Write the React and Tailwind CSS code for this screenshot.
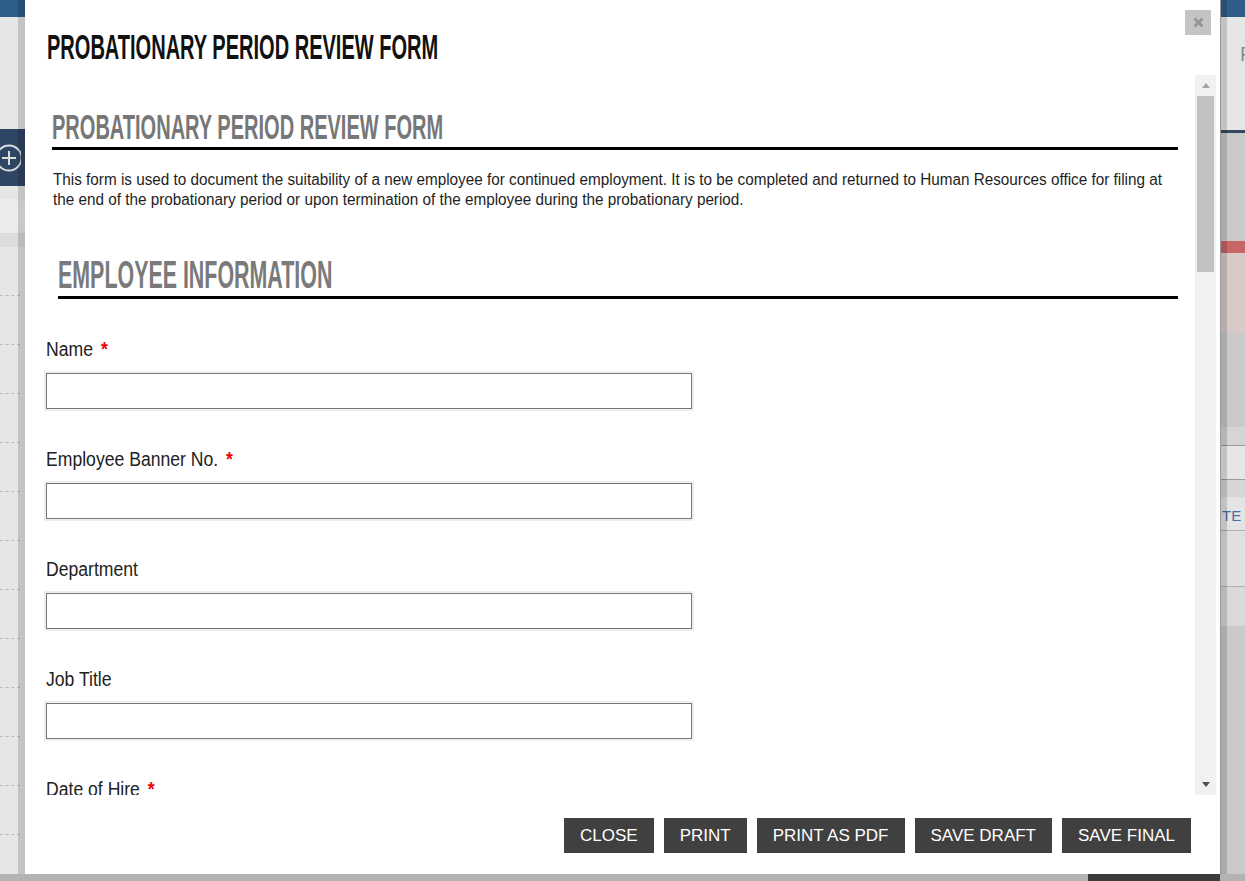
import React from "react";

const SANS = "font-['Liberation_Sans',Arial,sans-serif]";

function Field({ label, required }) {
  return (
    <div className="flex flex-col gap-[12px]">
      <div className={`h-[24px] text-[20px] leading-[24px] text-[#222] ${SANS}`}>
        <span className="inline-block origin-left scale-x-[0.88] whitespace-nowrap">
          {label}
          {required && <span className="ml-[9px] font-bold text-[#ee0000]">*</span>}
        </span>
      </div>
      <div className="w-[646px] h-[36px] border border-[#777] bg-white shadow-[0_0_0_2px_#eeeeee]" />
    </div>
  );
}

function LeftStrip() {
  const rows = Array.from({ length: 13 });
  return (
    <div className="relative w-[25px] h-full shrink-0 flex flex-col bg-[#e6e6e6] overflow-hidden">
      <div className="h-[17px] bg-[#2f5d89] shrink-0" />
      <div className="h-[112px] shrink-0" />
      <div className="h-[57px] bg-[#2f4565] flex items-center shrink-0">
        <svg width="26" height="32" viewBox="0 0 26 32" className="-ml-[5px]">
          <circle cx="14" cy="16" r="12.5" fill="none" stroke="#dcdcdc" strokeWidth="2" />
          <path d="M7 16h14M14 9v14" stroke="#dcdcdc" strokeWidth="2" />
        </svg>
      </div>
      <div className="h-[13px] shrink-0" />
      <div className="h-[34px] bg-[#ececec] rounded-r-[6px] shrink-0" />
      <div className="h-[14px] bg-[#dcdcdc] shrink-0" />
      <div className="flex flex-col shrink-0">
        {rows.map((_, i) => (
          <div key={i} className="h-[49px] w-[20px] border-b border-dashed border-[#bdbdbd] shrink-0" />
        ))}
      </div>
      <div className="absolute top-0 right-0 w-[7px] h-full bg-black/15" />
    </div>
  );
}

function RightStrip() {
  return (
    <div className="relative w-[25px] h-full shrink-0 flex flex-col bg-[#c9c9c9] overflow-hidden">
      <div className="h-[17px] bg-[#2f5d89] shrink-0" />
      <div className={`h-[113px] bg-[#e6e6e6] shrink-0 pl-[20px] pt-[25px] text-[20px] leading-[24px] text-[#8a8a8a] ${SANS}`}>
        F
      </div>
      <div className="h-[3px] bg-[#34495e] shrink-0" />
      <div className="h-[108px] shrink-0" />
      <div className="h-[12px] bg-[#c86565] shrink-0" />
      <div className="h-[80px] bg-[#d9caca] shrink-0" />
      <div className="h-[94px] shrink-0" />
      <div className="h-[18px] bg-[#d5d5d5] shrink-0" />
      <div className="h-[34px] bg-[#e6e6e6] border-t border-[#9a9a9a] shrink-0" />
      <div className="h-[18px] bg-[#d6d6d6] border-t border-[#9a9a9a] shrink-0" />
      <div className={`h-[33px] bg-[#e4e4e4] shrink-0 pl-[2px] pt-[10px] text-[15px] leading-[17px] text-[#4a6fa5] ${SANS}`}>
        TE
      </div>
      <div className="h-[56px] bg-[#e0e0e0] border-t border-[#b0b0b0] shrink-0" />
      <div className="h-[40px] bg-[#d9d9d9] border-t border-[#b0b0b0] shrink-0" />
      <div className="absolute top-0 left-0 w-[7px] h-full bg-black/15 border-l border-[#999]" />
    </div>
  );
}

function Scrollbar() {
  return (
    <div className="w-[21px] h-full bg-[#f1f1f1] flex flex-col items-center shrink-0">
      <div className="h-[21px] w-full flex items-center justify-center">
        <svg width="8" height="5" viewBox="0 0 8 5">
          <path d="M0 5L4 0L8 5Z" fill="#a3a3a3" />
        </svg>
      </div>
      <div className="w-[17px] h-[176px] bg-[#c1c1c1]" />
      <div className="flex-1" />
      <div className="h-[21px] w-full flex items-center justify-center">
        <svg width="8" height="5" viewBox="0 0 8 5">
          <path d="M0 0L4 5L8 0Z" fill="#505050" />
        </svg>
      </div>
    </div>
  );
}

function Btn({ children }) {
  return (
    <button className={`h-[35px] px-[16px] bg-[#404040] text-white text-[17px] leading-[35px] ${SANS}`}>
      {children}
    </button>
  );
}

function Modal() {
  return (
    <div className="relative w-[1195px] h-[874px] bg-white flex flex-col shrink-0">
      <div className="h-[75px] pl-[22px] pt-[25px] shrink-0">
        <div className={`text-[35px] leading-[44px] font-bold text-[#111] ${SANS}`}>
          <span className="inline-block origin-left scale-x-[0.572] whitespace-nowrap">
            PROBATIONARY PERIOD REVIEW FORM
          </span>
        </div>
      </div>
      <button className="absolute top-[10px] right-[9px] w-[26px] h-[25px] bg-[#c4c4c4] flex items-center justify-center">
        <svg width="11" height="11" viewBox="0 0 11 11">
          <path d="M1.5 1.5L9.5 9.5M9.5 1.5L1.5 9.5" stroke="#959595" strokeWidth="3" />
        </svg>
      </button>

      <div className="h-[720px] flex shrink-0">
        <div className="flex-1 overflow-hidden pl-[21px] pr-[17px]">
          <div className="mt-[32px] ml-[6px] border-b-[3px] border-black">
            <div className={`h-[40px] text-[35px] leading-[40px] font-bold text-[#777] ${SANS}`}>
              <span className="inline-block origin-left scale-x-[0.572] whitespace-nowrap">
                PROBATIONARY PERIOD REVIEW FORM
              </span>
            </div>
          </div>
          <div className="mt-[20px] ml-[7px]">
            <p className={`inline-block origin-left scale-x-[0.955] whitespace-nowrap text-[16px] leading-[20px] text-[#1e1e1e] ${SANS}`}>
              This form is used to document the suitability of a new employee for continued employment. It is to be completed and returned to Human Resources office for filing at
              <br />
              the end of the probationary period or upon termination of the employee during the probationary period.
            </p>
          </div>
          <div className="mt-[42px] ml-[12px] border-b-[3px] border-black">
            <div className={`h-[43px] text-[39px] leading-[43px] font-bold text-[#7a7a7a] ${SANS}`}>
              <span className="inline-block origin-left scale-x-[0.549] whitespace-nowrap">
                EMPLOYEE INFORMATION
              </span>
            </div>
          </div>
          <div className="mt-[38px] flex flex-col gap-[38px]">
            <Field label="Name" required />
            <Field label="Employee Banner No." required />
            <Field label="Department" />
            <Field label="Job Title" />
            <Field label="Date of Hire" required />
          </div>
        </div>
        <Scrollbar />
        <div className="w-[4px]" />
      </div>

      <div className="flex-1 flex justify-end items-start pt-[23px] pr-[29px] gap-[10px]">
        <Btn>CLOSE</Btn>
        <Btn>PRINT</Btn>
        <Btn>PRINT AS PDF</Btn>
        <Btn>SAVE DRAFT</Btn>
        <Btn>SAVE FINAL</Btn>
      </div>
    </div>
  );
}

export default function App() {
  return (
    <div className="w-[1245px] h-[881px] overflow-hidden flex flex-col bg-[#b3b3b3]">
      <div className="h-[874px] flex shrink-0">
        <LeftStrip />
        <Modal />
        <RightStrip />
      </div>
      <div className="flex-1 flex">
        <div className="w-[1088px]" />
        <div className="w-[132px] bg-[#3c3c3c]" />
      </div>
    </div>
  );
}
